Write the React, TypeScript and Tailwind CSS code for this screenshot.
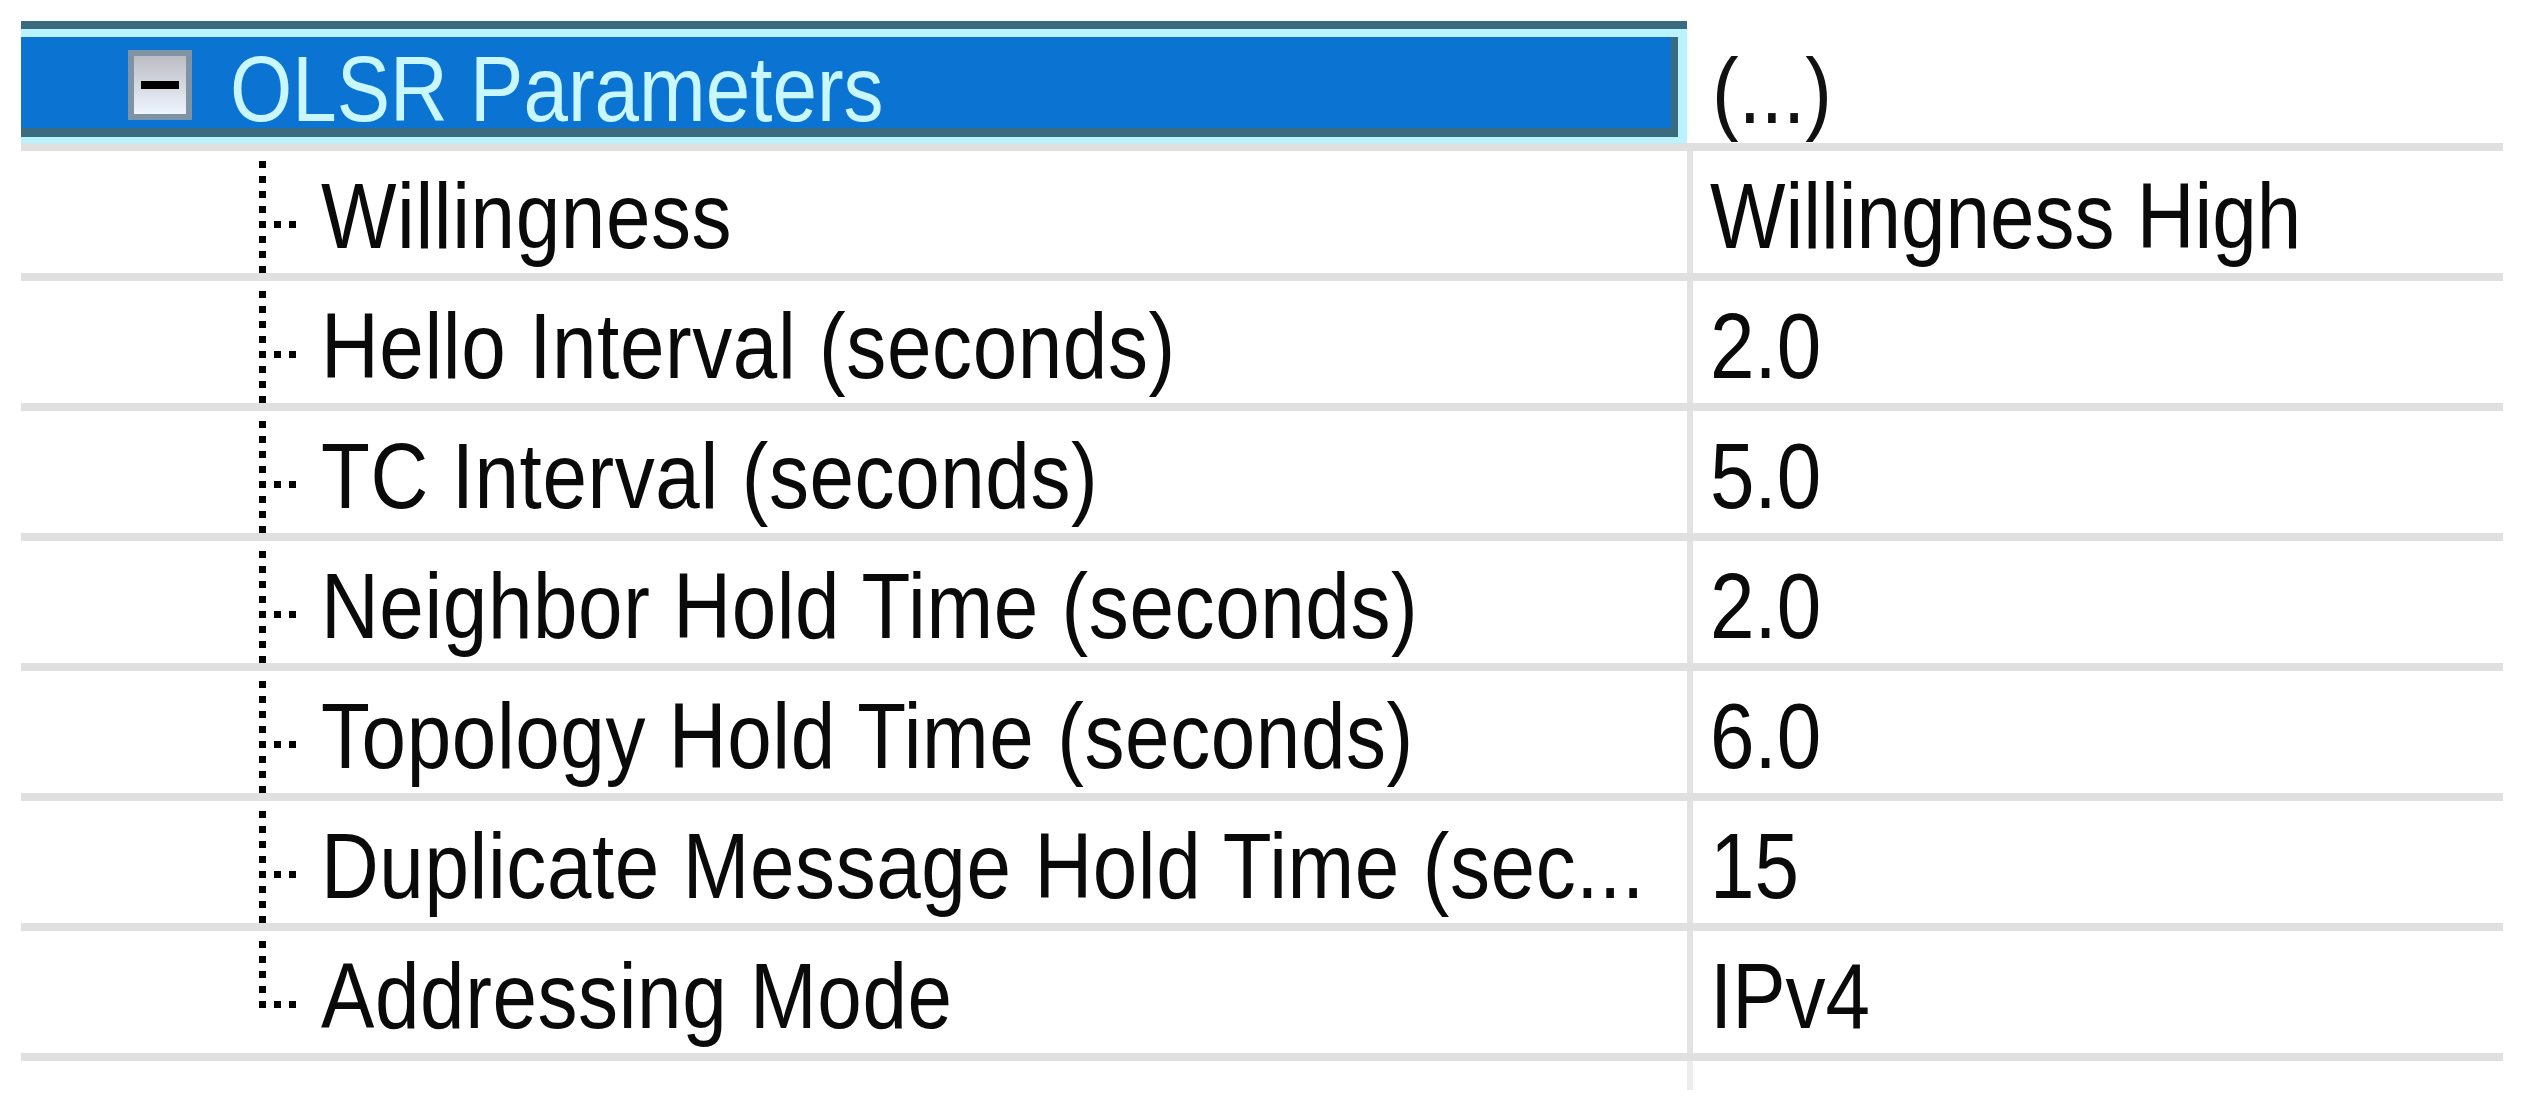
import React from "react";

const rows: [string, string][] = [
  ["Willingness", "Willingness High"],
  ["Hello Interval (seconds)", "2.0"],
  ["TC Interval (seconds)", "5.0"],
  ["Neighbor Hold Time (seconds)", "2.0"],
  ["Topology Hold Time (seconds)", "6.0"],
  ["Duplicate Message Hold Time (sec...", "15"],
  ["Addressing Mode", "IPv4"],
];

function Connector({ last }: { last: boolean }) {
  const ys = last ? [10, 25, 40, 55, 70] : [10, 25, 40, 55, 70, 85, 100, 115];
  return (
    <svg width="40" height="122" viewBox="0 0 40 122" className="shrink-0">
      {ys.map((y) => (
        <rect key={y} x="0" y={y} width="7" height="7" fill="#000" />
      ))}
      <rect x="15" y="70" width="7" height="7" fill="#000" />
      <rect x="30" y="70" width="7" height="7" fill="#000" />
    </svg>
  );
}

function Txt({ children, className = "" }: { children: React.ReactNode; className?: string }) {
  return (
    <span
      className={
        "block whitespace-nowrap text-[80px] leading-none scale-y-[1.17] translate-y-[4px] font-['Liberation_Sans',Arial,sans-serif] " +
        className
      }
    >
      {children}
    </span>
  );
}

export default function App() {
  return (
    <div className="w-[2531px] h-[1115px] bg-white pt-[21px] pl-[21px] overflow-hidden">
      <div className="w-[2482px] flex flex-col">
        {/* Header row */}
        <div className="flex h-[122px]">
          <div className="w-[1666px] h-full border-t-[8px] border-[#3a6b7e] bg-[#b8f3ff] pt-[8px] pr-[9px] pb-[6px]">
            <div className="h-full bg-[#0b73d1] border-r-[7px] border-b-[9px] border-[#3a6b7e] flex items-center pt-[4px]">
              <div className="ml-[107px] w-[64px] h-[70px] border-[6px] border-[#7f93a6] bg-linear-to-b from-[#bdbcc4] to-[#eef5ff] flex items-center justify-center shrink-0">
                <div className="w-[38px] h-[8px] bg-black" />
              </div>
              <div className="ml-[38px]">
                <Txt className="text-[#c8f7ff]">OLSR Parameters</Txt>
              </div>
            </div>
          </div>
          <div className="w-[6px]" />
          <div className="flex-1 flex items-center pl-[19px] pt-[10px]">
            <Txt className="text-[#111]">(...)</Txt>
          </div>
        </div>

        {rows.map(([label, value], i) => (
          <div key={label} className="flex flex-col">
            <div className="h-[8px] bg-[#e0e0e0]" />
            <div className="flex h-[122px]">
              <div className="w-[1666px] flex items-center overflow-hidden">
                <div className="w-[238px] shrink-0" />
                <Connector last={i === rows.length - 1} />
                <div className="ml-[22px]">
                  <Txt className="text-[#0a0a0a] tracking-[0.6px]">{label}</Txt>
                </div>
              </div>
              <div className="w-[6px] bg-[#e3e3e3]" />
              <div className="flex-1 flex items-center pl-[17px]">
                <Txt className="text-[#0a0a0a]">{value}</Txt>
              </div>
            </div>
          </div>
        ))}
        <div className="h-[8px] bg-[#e0e0e0]" />
        <div className="flex h-[29px]">
          <div className="w-[1666px]" />
          <div className="w-[6px] bg-[#ececec]" />
        </div>
      </div>
    </div>
  );
}
